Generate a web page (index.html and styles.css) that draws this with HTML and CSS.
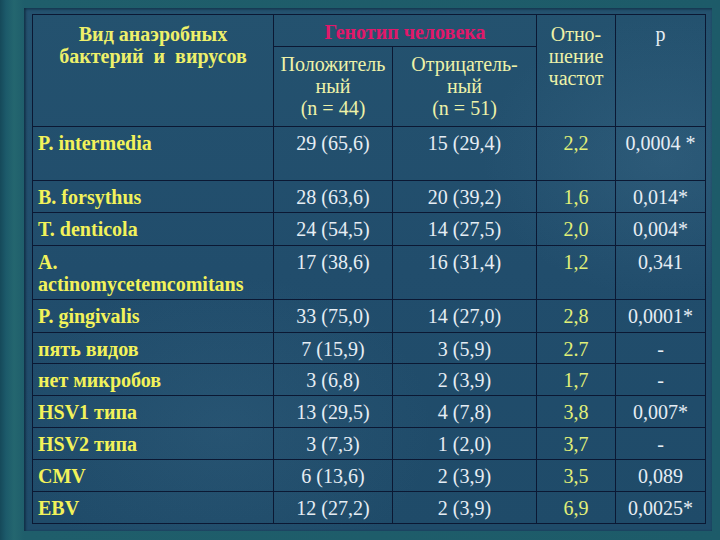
FILE: index.html
```html
<!DOCTYPE html>
<html lang="ru">
<head>
<meta charset="utf-8">
<title>Таблица</title>
<link rel="stylesheet" href="styles.css">
</head>
<body>
<div class="slide">
  <div class="panel">
    <table class="data">
      <colgroup>
        <col class="c1"><col class="c2"><col class="c3"><col class="c4"><col class="c5">
      </colgroup>
      <tr class="h1">
        <th rowspan="2" class="name-h">Вид анаэробных<br>бактерий&nbsp; и&nbsp; вирусов</th>
        <th colspan="2" class="geno">Генотип человека</th>
        <th rowspan="2" class="sub">Отно-<br>шение<br>частот</th>
        <th rowspan="2" class="ph">p</th>
      </tr>
      <tr class="h2">
        <th class="sub">Положитель<br>ный<br>(n = 44)</th>
        <th class="sub">Отрицатель-<br>ный<br>(n = 51)</th>
      </tr>
      <tr class="tall"><td class="nm">P. intermedia</td><td>29 (65,6)</td><td>15 (29,4)</td><td class="r">2,2</td><td>0,0004 *</td></tr>
      <tr class="r32"><td class="nm">B. forsythus</td><td>28 (63,6)</td><td>20 (39,2)</td><td class="r">1,6</td><td>0,014*</td></tr>
      <tr class="r33"><td class="nm">T. denticola</td><td>24 (54,5)</td><td>14 (27,5)</td><td class="r">2,0</td><td>0,004*</td></tr>
      <tr class="tall"><td class="nm">A.<br>actinomycetemcomitans</td><td>17 (38,6)</td><td>16 (31,4)</td><td class="r">1,2</td><td>0,341</td></tr>
      <tr class="r33"><td class="nm">P. gingivalis</td><td>33 (75,0)</td><td>14 (27,0)</td><td class="r">2,8</td><td>0,0001*</td></tr>
      <tr class="r31"><td class="nm">пять видов</td><td>7 (15,9)</td><td>3 (5,9)</td><td class="r">2.7</td><td>-</td></tr>
      <tr class="r32"><td class="nm">нет микробов</td><td>3 (6,8)</td><td>2 (3,9)</td><td class="r">1,7</td><td>-</td></tr>
      <tr class="r32"><td class="nm">HSV1 типа</td><td>13 (29,5)</td><td>4 (7,8)</td><td class="r">3,8</td><td>0,007*</td></tr>
      <tr class="r32"><td class="nm">HSV2 типа</td><td>3 (7,3)</td><td>1 (2,0)</td><td class="r">3,7</td><td>-</td></tr>
      <tr class="r32"><td class="nm">CMV</td><td>6 (13,6)</td><td>2 (3,9)</td><td class="r">3,5</td><td>0,089</td></tr>
      <tr class="r32"><td class="nm">EBV</td><td>12 (27,2)</td><td>2 (3,9)</td><td class="r">6,9</td><td>0,0025*</td></tr>
    </table>
  </div>
</div>
</body>
</html>
```
FILE: styles.css
```css
html, body {
  margin: 0;
  padding: 0;
}
body {
  width: 720px;
  height: 540px;
  overflow: hidden;
  background: linear-gradient(90deg, #15495a 0px, #1c5a6a 6px, #24666f 14px, #1f5e6b 24px, #1d5b69 100%);
  font-family: "Liberation Serif", "Tinos", "Times New Roman", "DejaVu Serif", serif;
}
.slide {
  padding: 8px 8px 9px 24px;
  height: 523px;
}
.panel {
  height: 517px;
  padding: 6px 0 0 8px;
  background:
    radial-gradient(ellipse 260px 200px at 640px 150px, rgba(90,140,170,0.18), rgba(0,0,0,0) 70%),
    radial-gradient(ellipse 300px 220px at 200px 420px, rgba(90,140,170,0.12), rgba(0,0,0,0) 70%),
    linear-gradient(180deg, #24526f 0%, #214d6c 50%, #1f4b69 100%);
  box-shadow: inset 2px 0 2px rgba(10,30,50,0.5), inset 0 2px 2px rgba(10,30,50,0.35);
}
.data {
  border-collapse: collapse;
  table-layout: fixed;
  width: 673px;
  font-family: "Liberation Serif", "Tinos", "Times New Roman", "DejaVu Serif", serif;
}
.c1 { width: 241px; }
.c2 { width: 119px; }
.c3 { width: 144px; }
.c4 { width: 79px; }
.c5 { width: 90px; }
.data th, .data td {
  font-family: "Liberation Serif", "Tinos", "Times New Roman", "DejaVu Serif", serif;
  border: 1.5px solid #0b1833;
  padding: 4px 2px 0 2px;
  vertical-align: top;
  text-align: center;
  font-size: 20px;
  line-height: 22px;
  color: #e6edf4;
  font-weight: normal;
}
.h1 { height: 32px; }
.h2 { height: 80px; }
.tall { height: 54px; }
.r31 { height: 31px; }
.r32 { height: 32px; }
.r33 { height: 33px; }
.data td { padding-top: 5px; }
.data .name-h {
  font-weight: bold;
  color: #eef06a;
  padding-top: 8px;
}
.data .geno {
  font-weight: bold;
  color: #e0186a;
  vertical-align: middle;
  padding-top: 2px;
}
.data .sub {
  color: #eef2a8;
  padding-top: 8px;
}
.data .h2 .sub {
  padding-top: 6px;
}
.data .ph {
  color: #e6edf4;
  padding-top: 8px;
}
.data td.nm {
  text-align: left;
  padding-left: 5px;
  font-weight: bold;
  color: #f2f25a;
}
.data td.r {
  color: #e2f078;
}
```
